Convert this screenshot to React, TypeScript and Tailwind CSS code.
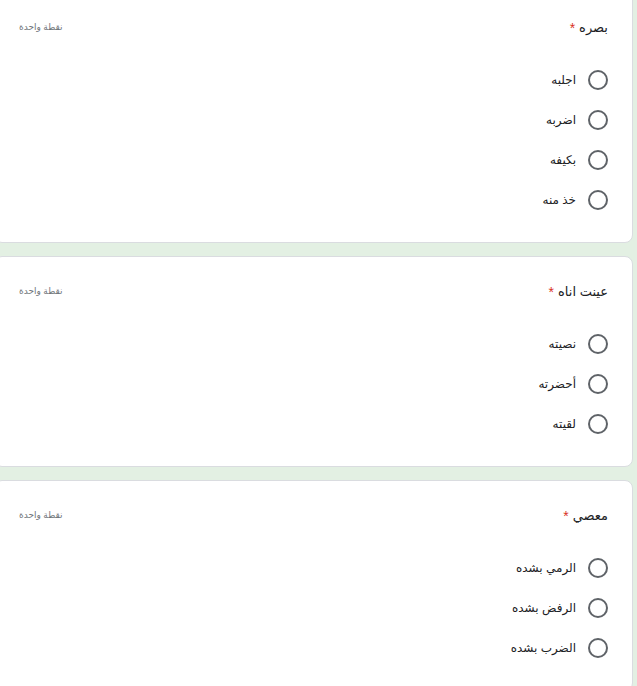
const questions = [
  { title: "بصره", options: ["اجلبه", "اضربه", "بكيفه", "خذ منه"] },
  { title: "عينت اناه", options: ["نصيته", "أحضرته", "لقيته"] },
  { title: "معصي", options: ["الرمي بشده", "الرفض بشده", "الضرب بشده"] },
];

function QuestionCard({ title, options }: { title: string; options: string[] }) {
  return (
    <div
      dir="rtl"
      className="rounded-lg border border-[#dadce0] bg-white pb-[22px] pl-6 pr-6 pt-[25px]"
    >
      {/* Header */}
      <div className="flex h-5 items-center justify-between">
        <div className="flex items-center gap-1 text-[13px] text-[#202124]">
          <span>{title}</span>
          <span className="text-[14px] text-[#d93025]">*</span>
        </div>
        <span className="text-[9px] text-[#70757a]">نقطة واحدة</span>
      </div>

      {/* Options */}
      <div className="mt-[22px] flex flex-col">
        {options.map((opt) => (
          <label key={opt} className="flex h-10 cursor-pointer items-center gap-3">
            <span className="size-5 shrink-0 rounded-full border-2 border-[#5f6368]" />
            <span className="text-[12px] text-[#202124]">{opt}</span>
          </label>
        ))}
      </div>
    </div>
  );
}

export default function App() {
  return (
    <div
      className="h-[686px] w-[637px] overflow-hidden bg-[#e3f0e3] pr-[4px]"
      style={{ fontFamily: "Arial, 'DejaVu Sans', 'Liberation Sans', sans-serif" }}
    >
      <div className="-ml-[6px] -mt-[8px] flex flex-col gap-[13px]">
        {questions.map((q) => (
          <QuestionCard key={q.title} title={q.title} options={q.options} />
        ))}
      </div>
    </div>
  );
}
